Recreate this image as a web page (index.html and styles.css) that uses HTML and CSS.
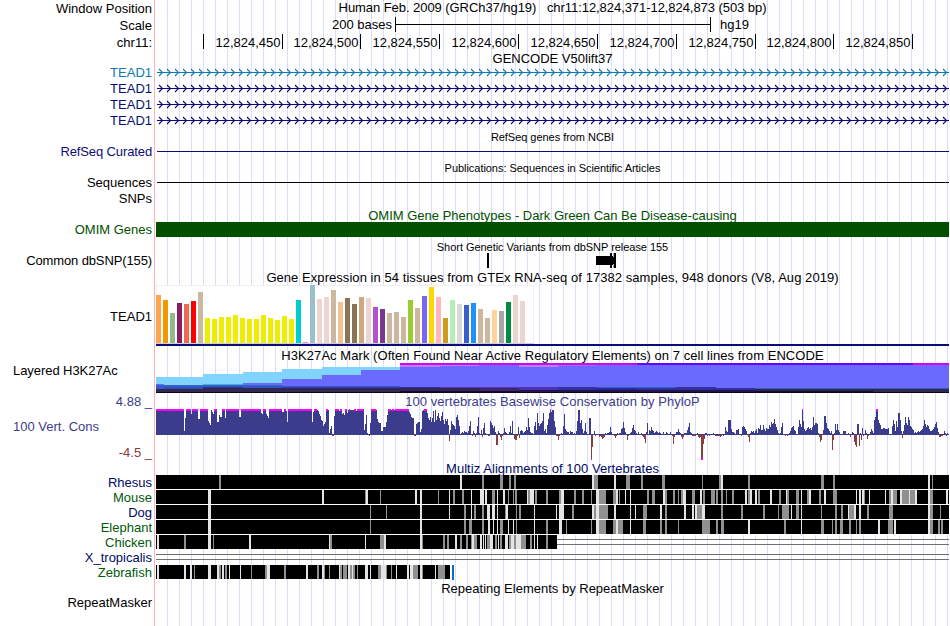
FILE: index.html
```html
<!DOCTYPE html>
<html>
	<head>
		<meta charset="utf-8">
		<title>chr11:12,824,371-12,824,873</title>
		<link rel="stylesheet" href="styles.css">
	</head>
	<body>
		<div class="browser">
			<div class="row h17"><div class="label">Window Position</div><div class="title position">Human Feb. 2009 (GRCh37/hg19) &nbsp; chr11:12,824,371-12,824,873 (503 bp)</div></div>
			<div class="row h17"><div class="label">Scale</div>
				<svg class="track" height="17">
					<text x="236" y="12" text-anchor="end">200 bases</text>
					<path d="M239.5 0V15M239 7.5H555M554.5 0V15" stroke="#000" fill="none"/>
					<text x="564" y="12">hg19</text>
				</svg>
			</div>
			<div class="row h17"><div class="label">chr11:</div><svg class="track" id="ruler" height="17"></svg></div>

			<div class="row h13"><div class="label"></div><div class="title">GENCODE V50lift37</div></div>
			<div class="row h16 lightblue"><div class="label">TEAD1</div><svg class="track gene" height="16"></svg></div>
			<div class="row h16 blue"><div class="label">TEAD1</div><svg class="track gene" height="16"></svg></div>
			<div class="row h16 blue"><div class="label">TEAD1</div><svg class="track gene" height="16"></svg></div>
			<div class="row h16 blue"><div class="label">TEAD1</div><svg class="track gene" height="16"></svg></div>

			<div class="row h17"><div class="label"></div><div class="title small">RefSeq genes from NCBI</div></div>
			<div class="row h14 blue"><div class="label tight">RefSeq Curated</div><svg class="track" height="14"><rect x="1" y="6" width="792" height="1" fill="currentColor"/></svg></div>
			<div class="row h17"><div class="label"></div><div class="title small">Publications: Sequences in Scientific Articles</div></div>
			<div class="row h14"><div class="label">Sequences</div><svg class="track" height="14"><rect x="1" y="6" width="792" height="1"/></svg></div>
			<div class="row h17"><div class="label">SNPs</div></div>

			<div class="row h15 green"><div class="label"></div><div class="title low">OMIM Gene Phenotypes - Dark Green Can Be Disease-causing</div></div>
			<div class="row h15 green"><div class="label">OMIM Genes</div><div class="bar"></div></div>
			<div class="row h16"><div class="label"></div><div class="title small">Short Genetic Variants from dbSNP release 155</div></div>
			<div class="row h15"><div class="label tight">Common dbSNP(155)</div>
				<svg class="track" height="15">
					<rect x="331" y="0" width="2" height="15"/>
					<rect x="440" y="3" width="17" height="9"/>
					<rect x="454" y="0" width="2" height="15"/>
					<rect x="457" y="0" width="1" height="15" fill="#aaa"/>
					<rect x="457" y="4" width="1" height="7"/>
					<rect x="458" y="0" width="2" height="15"/>
				</svg>
			</div>

			<div class="row h17"><div class="label"></div><div class="title low wide">Gene Expression in 54 tissues from GTEx RNA-seq of 17382 samples, 948 donors (V8, Aug 2019)</div></div>
			<div class="row h62"><div class="label">TEAD1</div><svg class="track" id="gtex" height="62"></svg></div>

			<div class="row h16"><div class="label"></div><div class="title low wide">H3K27Ac Mark (Often Found Near Active Regulatory Elements) on 7 cell lines from ENCODE</div></div>
			<div class="row h30"><div class="label left">Layered H3K27Ac</div><svg class="track" id="h3k27ac" height="30"></svg></div>

			<div class="row h16 cons"><div class="label">4.88 _</div><div class="title low wide">100 vertebrates Basewise Conservation by PhyloP</div></div>
			<div class="row h52 cons">
				<div class="label stack"><span class="name">100 Vert. Cons</span><span class="min">-4.5 _</span></div>
				<svg class="track" id="phylop" height="52"></svg>
			</div>

			<div class="row h14 navy"><div class="label"></div><div class="title low wide">Multiz Alignments of 100 Vertebrates</div></div>
			<div class="row h15 navy"><div class="label">Rhesus</div><svg class="track" id="rhesus" height="15"></svg></div>
			<div class="row h15 leaf"><div class="label">Mouse</div><svg class="track" id="mouse" height="15"></svg></div>
			<div class="row h15 navy"><div class="label">Dog</div><svg class="track" id="dog" height="15"></svg></div>
			<div class="row h15 leaf"><div class="label">Elephant</div><svg class="track" id="elephant" height="15"></svg></div>
			<div class="row h15 leaf"><div class="label">Chicken</div><svg class="track" id="chicken" height="15"></svg></div>
			<div class="row h15 navy"><div class="label">X_tropicalis</div><svg class="track" id="xtropicalis" height="15"></svg></div>
			<div class="row h15 leaf"><div class="label">Zebrafish</div><svg class="track" id="zebrafish" height="15"></svg></div>

			<div class="row h16"><div class="label"></div><div class="title low">Repeating Elements by RepeatMasker</div></div>
			<div class="row h14"><div class="label">RepeatMasker</div></div>
		</div>
		<script src="tracks.js"></script>
	</body>
</html>
```
FILE: styles.css
```css
html, body { margin: 0; padding: 0; background-color: #FFF; }
body {
	font-family: "Liberation Sans", Arial, sans-serif;
	font-size: 13px;
	color: #000;
	overflow: hidden;
}
.browser {
	width: 949px;
	height: 626px;
	background-image:
		linear-gradient(to right, transparent 154px, #ffb4b4 154px, #ffb4b4 155px, transparent 155px),
		repeating-linear-gradient(to right, transparent 0, transparent 11px, #dcdcf8 11px, #dcdcf8 12px);
	background-position: 0 0, 156px 0;
	background-size: 949px 100%, 793px 100%;
	background-repeat: no-repeat;
}
.row { display: flex; }
.label {
	box-sizing: border-box;
	flex: none;
	width: 156px;
	padding-right: 4px;
	text-align: right;
	white-space: nowrap;
}
.track { display: block; flex: none; width: 793px; shape-rendering: crispEdges; }
.track text { font-size: 13px; }

.h13 { height: 13px; line-height: 15px; }
.h14 { height: 14px; line-height: 14px; }
.h15 { height: 15px; line-height: 15px; }
.h16 { height: 16px; line-height: 18px; }
.h17 { height: 17px; line-height: 17px; }
.h30 { height: 30px; }
.h52 { height: 52px; }
.h62 { height: 62px; line-height: 64px; }

.label.left { text-align: left; padding-left: 13px; line-height: 15px; letter-spacing: -0.06px; }
.label.tight { letter-spacing: -0.12px; }
.title { flex: 1; text-align: center; white-space: nowrap; }
.title.small { font-size: 11px; letter-spacing: -0.04px; padding-top: 1px; }
.title.position { line-height: 15px; letter-spacing: -0.06px; }
.title.low { line-height: 17px; }
.h14 .title.low { line-height: 16px; }
.h16 .title.low { line-height: 18px; }
.h17 .title.low { line-height: 19px; }
.title.wide { letter-spacing: 0.055px; }

.lightblue { color: #0c78b4; }
.blue { color: #0c0c78; }
.green { color: #005000; }
.navy { color: #000a64; }
.leaf { color: #005a0a; }
.cons { color: #3c3c8c; }

.bar { width: 793px; background-color: #005000; }
.stack { display: flex; flex-direction: column; justify-content: space-between; padding-top: 10px; line-height: 15px; }
.stack .name { text-align: left; padding-left: 13px; }
.stack .min { color: #8c3c3c; padding-bottom: 1px; }
```
FILE: tracks.js
```js
var LEFT = 156;
var WIDTH = 793;

function rect(svg, x, y, w, h, color) {
	var r = document.createElementNS("http://www.w3.org/2000/svg", "rect");
	r.setAttribute("x", x);
	r.setAttribute("y", y);
	r.setAttribute("width", w);
	r.setAttribute("height", h);
	r.setAttribute("fill", color);
	svg.appendChild(r);
}

function drawRuler() {
	var svg = document.getElementById("ruler");
	var ticks = [203, 282, 360, 439, 518, 597, 676, 755, 833, 912];
	for (var i = 0; i < ticks.length; i++) {
		rect(svg, ticks[i] - LEFT, 0, 1, 15, "#000");
		if (i == 0) continue;
		var t = document.createElementNS("http://www.w3.org/2000/svg", "text");
		t.setAttribute("x", ticks[i] - LEFT - 1.5);
		t.setAttribute("y", 13);
		t.setAttribute("text-anchor", "end");
		t.textContent = "12,824," + (400 + i * 50);
		svg.appendChild(t);
	}
}

// intron line with strand arrows every 8px
function drawGenes() {
	var genes = document.getElementsByClassName("gene");
	for (var i = 0; i < genes.length; i++) {
		rect(genes[i], 1, 8, WIDTH - 1, 1, "currentColor");
		var d = "";
		for (var x = 3; x < WIDTH - 4; x += 8)
			d += "M" + x + " 5l3.5 3.5l-3.5 3.5";
		var p = document.createElementNS("http://www.w3.org/2000/svg", "path");
		p.setAttribute("d", d);
		p.setAttribute("fill", "none");
		p.setAttribute("stroke", "currentColor");
		p.setAttribute("stroke-width", "1.1");
		p.setAttribute("shape-rendering", "auto");
		genes[i].appendChild(p);
	}
}

function drawGtex() {
	var svg = document.getElementById("gtex");
	var tan = "#cdb79e", yel = "#eeee00", pink = "#eed5d2";
	var heights = [48,43,30,40,39,42,51,25,24,26,26,28,25,24,24,28,25,23,27,24,43,1,58,44,46,53,41,45,39,46,45,36,34,30,31,26,43,35,47,56,46,25,43,39,38,40,34,25,33,32,41,48,42];
	var colors = ["#ffa54f","#ee9a00","#8fbc8f","#8b1c62","#ee6a50","#ff0000",tan,
		yel,yel,yel,yel,yel,yel,yel,yel,yel,yel,yel,yel,yel,
		"#00cdcd","#ee82ee","#9ac0cd",pink,pink,tan,"#eec591","#8b7355","#8b7355","#cdaa7d",pink,
		"#b452cd","#7a378b",tan,tan,tan,"#9acd32",tan,"#7a67ee","#ffd700","#ffb6c1","#cd9b1d",
		"#b4eeb4","#d9d9d9","#3a5fcd","#1e90ff",tan,tan,"#ffd39b","#a6a6a6","#008b45",pink,pink];
	rect(svg, 0, 0, 378, 59, "#f0f0f0");
	rect(svg, 1, 1, 376, 57, "#fff");
	rect(svg, 0, 58, 378, 1, "#d0d0d0");
	for (var i = 0; i < heights.length; i++)
		rect(svg, i * 7, 58 - heights[i], 5, heights[i], colors[i]);
	rect(svg, 0, 59, WIDTH, 2, "#0c0c78");
}

// x from, x to, top, bottom, color; painted in order
function drawH3k27ac() {
	var svg = document.getElementById("h3k27ac");
	var layers = [
		[156,203,377,385,"#80d4ff"], [203,243,374,385,"#80d4ff"], [243,282,372,385,"#80d4ff"],
		[282,322,369,385,"#80d4ff"], [322,400,367,385,"#80d4ff"],
		[156,164,384,386,"#6a6aff"], [203,243,384,385,"#40b0d8"], [243,282,383,386,"#6a6aff"],
		[282,322,379,388,"#6a6aff"], [322,361,375,388,"#6a6aff"], [361,400,370,388,"#6a6aff"],
		[400,949,365,388,"#6a6aff"],
		[400,637,363,365,"#d800f0"], [637,913,363,365,"#6600ff"], [913,949,363,365,"#d800f0"],
		[400,440,365,367,"#b880f8"], [440,479,365,366,"#b880f8"], [519,558,365,367,"#b880f8"], [558,597,365,366,"#9070ff"],
		[156,282,385,387,"#3060c8"], [156,164,387,389,"#3060c8"], [164,203,387,389,"#3050b8"], [203,282,386,388,"#3058c0"],
		[282,400,386,387,"#3058c0"], [282,400,387,388,"#3838b8"],
		[156,203,389,392,"#302850"], [203,243,387,388,"#3030a0"], [203,400,388,392,"#302850"],
		[400,440,387,388,"#3030a0"], [400,479,388,391,"#302850"], [440,519,387,388,"#6030c0"],
		[479,519,388,391,"#3c2868"], [519,558,387,390,"#5030b8"],
		[558,597,387,390,"#3030a0"], [597,637,387,388,"#3060c8"], [597,637,388,390,"#2828a0"],
		[637,676,387,388,"#3060c8"], [637,676,388,390,"#3030a0"],
		[676,716,387,390,"#3030a0"], [716,755,388,391,"#3030a0"],
		[755,949,388,389,"#3060c8"], [755,873,389,391,"#2c2848"], [873,949,389,392,"#302850"],
		[519,755,390,392,"#201448"], [400,519,391,392,"#180838"], [755,873,391,392,"#180838"],
		[156,949,392,393,"#100020"]
	];
	for (var i = 0; i < layers.length; i++) {
		var l = layers[i];
		rect(svg, l[0] - LEFT, l[2] - 363, l[1] - l[0], l[3] - l[2], l[4]);
	}
}

// one score per pixel column, "n*score" repeats; 26 and -25 are off the scale
var scores = "28*26 4 17 5*26 21 6*26 2*16 8*26 14 12 10 25 23 21 3*26 2*13 20 18 18 3*26 17 13*26 2*18 20*26 22 21 3*26 21 19 17 13*26 2*23 2*26 24 13 24*26 " +
	"13 23 3*26 25 24 21 19 15 14 9 11 13 2*26 25 2 6 9 2*-1 19 4*26 24 2*26 21 22 20 26 26 22 25 26 25 3*25 2*26 24 7*26 5 11 20 2 1 -1 12 5*26 " +
	"25 16 13 12 12 4 4 8 8 8 13 20 3*26 25 2*26 25 14*26 23 21 18 17 17 2*-1 11 12 13 13 " +
	"3 6 24 25 3*26 22 17 15 18 13 17 24 13 25 15 19 22 17 14 19 23 15 11 16 14 16 10 -6 5 14 11 10 9 6 18 20 15 9 1 2 3 2 4 3 3 2 4 9 14 1 -1 4 2 -2 2 9 18 2 1 5 -2 7 12 2 1 1 -1 -1 14 12 10 7 9 3 " +
	"-10 -10 4 2 -2 -5 -1 2 7 3 2 1 1 3 9 2 14 1 -4 -5 -5 -1 8 -3 4 5 4 2 3 4 8 5 17 8 3 2 2 1 9 13 5 22 12 9 11 12 14 22 4 6 2 10 16 22 26 23 25 25 14 8 -1 -1 -5 -1 1 2 1 9 21 6 4 3 3 1 4 3 3 1 2 1 4 14 25 25 12 15 6 2 4 12 3 1 1 17 17 " +
	"-25 -12 1 4 -1 1 1 1 -2 -1 -2 -4 -3 -2 2 1 2 2 3 8 3 1 1 -1 -3 -1 2 1 2 2 6 7 13 7 3 1 -5 -1 1 2 3 7 10 5 4 2 1 3 1 1 2 -1 -2 -4 -8 3 12 1 5 4 8 5 4 2 3 4 3 2 3 2 1 1 3 1 1 3 2 1 1 " +
	"3 1 -1 -9 -2 1 3 3 6 3 2 -2 -4 -2 2 2 2 5 8 12 3 2 -1 -1 -1 -1 1 2 -2 -3 -2 -25 -25 -9 -4 2 2 -1 1 -1 1 1 1 2 1 -1 -1 -1 -1 -1 -2 -1 1 -1 1 8 4 3 15 15 15 6 3 3 2 1 5 5 6 1 1 -1 8 9 8 6 4 1 -2 -7 2 4 3 4 2 4 6 2 7 6 10 5 5 10 6 4 7 6 6 10 " +
	"8 13 11 12 16 11 8 5 2 1 2 8 12 1 1 -1 1 -1 1 2 4 7 8 9 5 4 1 1 8 15 11 8 26 14 6 4 5 7 8 6 7 5 8 18 10 12 12 11 2 -2 -7 -5 1 5 19 19 12 7 6 4 2 4 -15 -5 2 11 5 11 5 3 1 1 1 4 4 4 1 1 2 1 -2 1 3 2 -7 -10 -12 11 11 -11 2 -5 7 -1 1 5 2 -4 -1 1 3 6 4 2 " +
	"15 18 26 26 15 12 10 6 6 7 7 6 6 6 7 1 1 1 9 15 11 4 14 8 22 22 15 4 -3 4 10 18 12 10 18 15 9 8 6 5 2 3 2 3 4 3 4 5 6 9 15 11 8 10 9 6 4 4 5 6 8 11 13 7 3 -2 -2 -1 -1 1 4 2 -1 2 1";

function drawPhylop() {
	var svg = document.getElementById("phylop");
	var items = scores.split(" ");
	var x = 0;
	for (var i = 0; i < items.length; i++) {
		var parts = items[i].split("*");
		var n = parts.length > 1 ? parseInt(parts[0]) : 1;
		var v = parseInt(parts[parts.length - 1]);
		if (v > 0) {
			rect(svg, x, 26 - v, n, v, "#3c3c8c");
			if (v == 26) rect(svg, x, 0, n, 2, "#ff00ff");
		} else {
			rect(svg, x, 26, n, -v, "#8c3c3c");
			if (v == -25) rect(svg, x, 49, n, 2, "#ff00ff");
		}
		x += n;
	}
	rect(svg, 0, 25, WIDTH, 1, "#3c3c8c");
}

// stripes: x, width and shade (g = gray, w = near white)
var align = {
	rhesus: "219 2g 460 2w 482 2g 500 3g 509 2g 514 2g 592 2w 594 4g 614 2w 626 4g 641 2g 662 3g 702 1g 719 2g 721 2w 748 2g 821 3g 833 2g 928 2w 932 1g",
	mouse: "208 3w 322 2w 365 1g 366 2w 380 1g 415 2w 420 2w 438 1g 449 1w 453 2g 462 2g 471 1w 480 4w 485 2w 492 3g 497 1w 503 2w 508 1g 513 1g 515 2g 527 1w 528 2g 530 4w 535 2g 546 2g 559 2g 561 3w 574 2g 582 2g 591 1g 596 3w 599 7g 613 3g 616 2w 619 1g 625 1w 630 1w 647 2g 652 3g 663 2w 665 2g 673 2g 678 1g 681 2g 683 3w 692 3g 700 2w 703 2g 711 4g 716 2g 721 2g 726 1g 732 2g 745 2w 748 2g 750 2w 755 2w 758 2g 770 2w 779 2g 786 1w 787 2g 796 3g 801 1w 807 2g 809 2w 819 2g 824 2w 833 4g 856 1w 859 2w 862 2w 864 1g 869 1w 885 1w 889 2g 891 2w 893 4g 900 2w 902 7g 909 1w 910 5g 915 2w 928 2w 930 3g 946 2w",
	dog: "208 3w 370 1g 386 1g 420 2w 449 1w 464 2g 471 1w 474 2g 482 2g 487 3w 492 3w 497 1w 505 1g 506 2w 516 1g 519 2g 534 1w 556 1w 559 5w 572 2g 592 2w 594 2g 596 3w 599 9g 614 2w 630 1w 635 1w 643 4g 660 2w 665 2g 684 2w 692 2w 695 2w 697 5g 702 3w 721 2g 741 2g 763 2g 778 1g 782 7g 791 1w 796 3g 801 1w 821 1g 835 2g 841 2g 848 1w 849 5g 854 2w 859 2w 867 2g 889 4g 928 2w 930 3g 940 1g",
	elephant: "208 3w 370 1g 420 2w 464 2g 469 3g 482 2g 488 2w 493 1w 497 1w 500 3g 508 1w 513 1w 516 1g 534 1w 546 2g 559 3w 566 1g 591 1g 596 3w 599 7g 613 3g 616 2w 618 5g 630 1w 643 3g 660 2g 665 2g 678 1g 702 8g 716 2g 721 3g 748 2w 784 2g 801 1w 821 3g 832 1g 835 2g 840 3g 849 2g 856 1g 859 2g 878 2w 888 5g 894 2w 928 2w 930 3g 938 2g 941 2g",
	chicken: "157 2w 184 2g 208 3w 213 1g 249 2w 329 1w 330 2g 365 1w 380 4g 384 2w 420 2w 422 1g 443 2g 447 2g 455 2w 460 2g 466 2g 471 1g 472 2w 474 3g 480 2w 483 1w 485 1w 487 3g 490 3w 495 2g 498 1w 500 2g 505 3w 509 2g 511 3w 514 2g 516 5w 521 5g 530 2g 534 1w 537 1w 546 2g",
	xtropicalis: "",
	zebrafish: "157 2w 184 2w 190 2w 194 1g 208 3w 217 2w 219 2g 222 2w 225 2g 229 1w 240 1w 251 1g 265 2g 267 3w 284 2g 306 2w 317 2g 322 2w 324 1g 329 1g 339 1w 340 2g 343 4g 348 2w 350 2g 352 1w 353 2g 357 1g 365 3w 370 1w 378 3g 381 5w 386 1g 391 1g 396 1w 407 2w 410 3w 413 5g 420 2w 422 1g 435 1w 438 7g"
};

// last aligned column of each species
var ends = { rhesus: 949, mouse: 949, dog: 949, elephant: 949, chicken: 557, xtropicalis: 156, zebrafish: 450 };

function drawAlignments() {
	for (var name in align) {
		var svg = document.getElementById(name);
		var end = ends[name];
		rect(svg, 0, 0, end - LEFT, 14, "#000");
		var s = align[name].split(" ");
		for (var i = 0; i + 1 < s.length; i += 2)
			rect(svg, s[i] - LEFT, 0, parseInt(s[i + 1]), 14, s[i + 1].slice(-1) == "g" ? "#909090" : "#e4e4e4");
		if (end == 949) rect(svg, 0, 14, WIDTH, 1, "#fff");
		// double line where there is no alignable sequence
		if (name == "chicken" || name == "xtropicalis") {
			rect(svg, end - LEFT, 4, 949 - end, 1, "#707070");
			rect(svg, end - LEFT, 9, 949 - end, 1, "#707070");
		}
	}
	rect(document.getElementById("zebrafish"), 294, 0, 1, 14, "#fff");
	rect(document.getElementById("zebrafish"), 296, 0, 2, 15, "#0070c8");
}

drawRuler();
drawGenes();
drawGtex();
drawH3k27ac();
drawPhylop();
drawAlignments();
```
